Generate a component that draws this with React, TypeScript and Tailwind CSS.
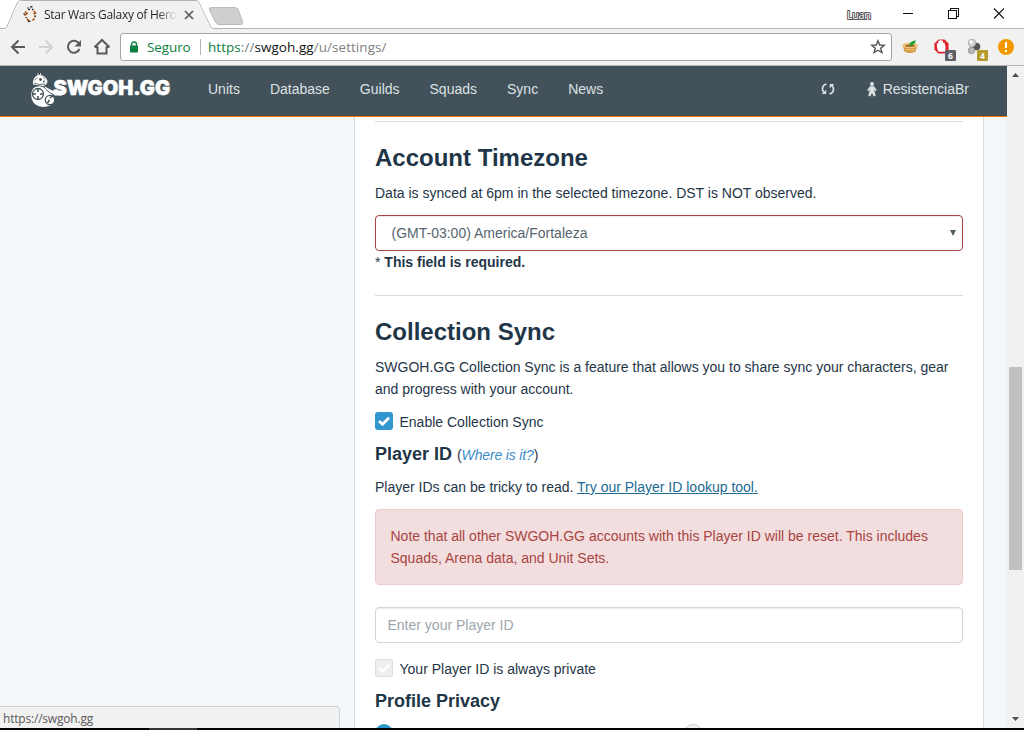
import React from 'react';

const ui = "font-['Open_Sans','Noto_Sans',sans-serif]";

function Favicon() {
  return (
    <svg width="16" height="16" viewBox="0 0 16 16">
      <path d="M4.500 4.500L7 1h2.500l2.500 3.500z" fill="#e4e0dc" />
      <path d="M5.500 1.800h1M8 .8h2.500M6 3.500h2M10 3.500h1.500" stroke="#222" strokeWidth="1.300" />
      <circle cx="8" cy="9.500" r="5.600" fill="#f4efe9" />
      <path d="M3 5.500l2 2-2.500 2M12 5l1.500 2-2 1M5 12.500l1.500 2.500M10.500 14.500l2-2" stroke="#b0501c" strokeWidth="1.600" fill="none" />
      <path d="M1.500 7.500l1.500 1M12.500 9.500l1 1.500M4 11v1M6 15.300h2.500" stroke="#2b2522" strokeWidth="1.400" fill="none" />
    </svg>
  );
}

function TabStrip() {
  return (
    <div className="relative h-[28px] shrink-0 bg-white">
      <svg className="absolute left-0 top-0" width="1024" height="29" viewBox="0 0 1024 29">
        <path d="M0 28.500H4Q6 28.500 7 26.500L17.500 2.500Q18.500.500 20.500.500H196Q198 .500 199 2.500L210.500 26.500Q211.500 28.500 213.500 28.500H1024" fill="none" stroke="#b2b2b2" />
        <path d="M5 29Q7 28.500 7.500 27L18 3Q19 1 21 1H196Q198 1 199 3L210 27Q211 29 213 29z" fill="#f1f1f1" />
        <path d="M211.500 7.500H235Q237 7.500 238 9.500L242.500 21Q243.500 24.500 241 24.500H219Q216.500 24.500 215.500 22L209.500 10Q208.500 7.500 211.500 7.500z" fill="#cfcfcf" stroke="#b9b9b9" />
      </svg>
      <div className={`relative flex h-[28px] items-center pl-[22px] ${ui}`}>
        <Favicon />
        <span className="ml-[6px] mt-[2px] w-[134px] whitespace-nowrap bg-linear-to-r from-[#222] from-85% to-transparent to-99% bg-clip-text text-[12px] leading-[18px] tracking-[-0.3px] text-transparent">
          Star Wars Galaxy of Hero
        </span>
        <svg className="ml-[6px] mt-[2px]" width="10" height="10" viewBox="0 0 10 10">
          <path d="M1 1l8 8M9 1L1 9" stroke="#5a5a5a" strokeWidth="1.700" />
        </svg>
        <svg className="ml-auto mt-[1px]" width="30" height="16" viewBox="0 0 30 16">
          <text x="1" y="12" fontSize="11" textLength="24" fill="#fff" stroke="#555" strokeWidth="2" strokeLinejoin="round" paintOrder="stroke">Luan</text>
        </svg>
        <svg className="ml-[24px] mr-[20px]" width="104" height="20" viewBox="0 0 104 20" fill="none" stroke="#111" shapeRendering="crispEdges">
          <path d="M3 9.500H13" />
          <path d="M48.500 6.500H56.500V14.500H48.500zM50.500 6V4.500H58.500V12.500H57" />
          <path d="M94 4.500L104 14.500M104 4.500L94 14.500" shapeRendering="auto" strokeWidth="1.200" />
        </svg>
      </div>
    </div>
  );
}

function Toolbar() {
  return (
    <div className={`flex h-[38px] shrink-0 items-center border-b border-[#b4b4b4] bg-[#f1f1f1] ${ui}`}>
      <svg width="120" height="37" viewBox="0 0 120 37" fill="none" strokeWidth="2">
        <path d="M25 19H12.500M18.500 12.500L12 19L18.500 25.500" stroke="#5a5a5a" />
        <path d="M39 19H51.500M45.500 12.500L52 19L45.500 25.500" stroke="#d2d2d2" />
        <path d="M79 15.500A6 6 0 1 0 79.500 21" stroke="#5a5a5a" />
        <path d="M81 12v6.500h-6.500z" fill="#5a5a5a" />
        <path d="M97.500 19V25.500H106.500V19M94.500 19.300L102 12L109.500 19.300M95 19h3M106 19h3" stroke="#5a5a5a" />
      </svg>
      <div className="flex h-[28px] w-[772px] items-center rounded-[3px] border border-[#a6a6a6] bg-white">
        <svg className="ml-[8px]" width="10" height="12" viewBox="0 0 10 12">
          <path d="M2.500 5V3.300a2.500 2.300 0 0 1 5 0V5" fill="none" stroke="#0b8043" strokeWidth="1.400" />
          <rect x="1" y="4.500" width="8" height="7" rx=".5" fill="#0b8043" />
        </svg>
        <span className="ml-[8px] w-[46px] whitespace-nowrap text-[13.500px] leading-[20px] tracking-[-0.1px] text-[#0b8043]">Seguro</span>
        <span className="ml-[7px] h-[16px] w-px bg-[#b5b5b5]" />
        <span className="ml-[7px] whitespace-nowrap text-[13.500px] leading-[20px] tracking-[0.05px] text-[#808080]">
          <span className="text-[#0b8043]">https</span>://<span className="text-[#111]">swgoh.gg</span>/u/settings/
        </span>
        <svg className="ml-auto mr-[5px]" width="16" height="16" viewBox="0 0 16 16">
          <path d="M8 1.800L9.700 6l4.500.300-3.500 2.900 1.200 4.400L8 11.200l-3.900 2.400 1.200-4.400L1.800 6.300 6.300 6z" fill="none" stroke="#555" strokeWidth="1.400" />
        </svg>
      </div>
      <svg width="132" height="37" viewBox="892 28 132 37">
        <path d="M902.500 45h15l-2 6.500q-5.500 3-11 0z" fill="#d3923a" />
        <ellipse cx="910" cy="45.500" rx="8" ry="2.800" fill="#efc77a" />
        <path d="M904.500 49.500h11M907 48.500v4M910 48.500v4M913 48.500v4" stroke="#f0c878" strokeWidth=".8" />
        <ellipse cx="910" cy="45.700" rx="5" ry="1.300" fill="#a8692a" />
        <path d="M909 46q0-5 7-5.500q-1 4-5 5z" fill="#23a332" />
        <path d="M938.500 39.500h6l4 4v6l-4 4h-6l-4-4v-6z" fill="#e0202b" />
        <path d="M938.500 51.800q-2-3-1.700-8.500h1.500v-2.500h1.500v-1h1.500v1h1.700v2h1.500l1 4v5z" fill="#fff" />
        <rect x="945" y="50" width="11" height="11" rx="1" fill="#5f6066" />
        <text x="948" y="59" fontSize="8.500" fontWeight="700" fill="#fff">6</text>
        <circle cx="976.500" cy="46.500" r="3.800" fill="#555" />
        <circle cx="972" cy="43" r="3.800" fill="#d5d5d5" stroke="#999" strokeWidth=".7" />
        <circle cx="971.500" cy="50.500" r="3.300" fill="#b7b7b7" stroke="#888" strokeWidth=".7" />
        <circle cx="971" cy="42" r="1.500" fill="#fff" />
        <rect x="977" y="50" width="11" height="11" rx="1" fill="#b29b29" />
        <text x="980" y="59" fontSize="8.500" fontWeight="700" fill="#fff">4</text>
        <circle cx="1006" cy="47" r="8" fill="#f29900" />
        <path d="M1006 42v6M1006 50v2" stroke="#fff" strokeWidth="2" />
      </svg>
    </div>
  );
}

function Logo() {
  return (
    <svg className="ml-[30px] shrink-0" width="142" height="38" viewBox="30 71 142 38">
      <path d="M38 77v-3M40.500 76v-2" stroke="#fff" strokeWidth=".8" />
      <path d="M33 85.500Q32.500 77.500 38.500 76Q46 75.500 47.500 82.500Q47 86 43 87L37 86z" fill="#fff" />
      <path d="M34.500 81l3-2.500M43 77.500l3 3M34 84q5 2.500 11 1" stroke="#43525a" strokeWidth=".8" fill="none" />
      <circle cx="40.500" cy="80.500" r="1.400" fill="#43525a" />
      <circle cx="44" cy="82.500" r=".9" fill="#43525a" />
      <path d="M33.500 89Q38 86 43 88L48 92Q54 96 54 100Q53 107 44 108Q35 108 32 101Q30 94 33.500 89z" fill="#fff" />
      <circle cx="38" cy="95" r="5.500" fill="none" stroke="#43525a" strokeWidth="1.300" />
      <path d="M38 90v3M38 97v3M33 95h3M40 95h3" stroke="#43525a" strokeWidth="1.600" />
      <circle cx="50" cy="101" r="4.700" fill="#fff" stroke="#43525a" strokeWidth="1.300" />
      <path d="M47.500 104l2-3M50 99l3-2.500" stroke="#43525a" strokeWidth="1.600" />
      <path d="M44 87L52 91.500H62V96.500H55Q48 94 44 87z" fill="#fff" />
      <path d="M46.500 91Q51 95.500 54 95.500" stroke="#43525a" strokeWidth=".9" fill="none" />
      <text x="53.500" y="96" fontFamily="Inter, sans-serif" fontSize="19.500" fontWeight="900" textLength="116.500" lengthAdjust="spacingAndGlyphs" fill="#fff" stroke="#fff" strokeWidth=".5">SWGOH.GG</text>
    </svg>
  );
}

function SiteNav() {
  return (
    <nav className="flex h-[51px] shrink-0 items-center border-b border-[#ed7500] bg-[#43525a] pb-[4px] text-[14px] leading-[20px] text-[#dce1e4]">
      <Logo />
      <div className="ml-[36px] flex gap-[30px] whitespace-nowrap">
        <span>Units</span>
        <span>Database</span>
        <span>Guilds</span>
        <span>Squads</span>
        <span>Sync</span>
        <span>News</span>
      </div>
      <svg className="ml-auto" width="14" height="14" viewBox="0 0 14 14" fill="none" stroke="#dce1e4" strokeWidth="1.700">
        <path d="M5.500 2Q1.500 3 1.500 7Q1.500 9 3 10.800M8.500 12Q12.500 11 12.500 7Q12.500 5 11 3.200" />
        <path d="M.8 12h4.400V7.800zM13.200 2H8.800V6.200z" fill="#dce1e4" stroke="none" />
      </svg>
      <svg className="ml-[32px]" width="10" height="15" viewBox="0 0 10 15" fill="#dce1e4">
        <circle cx="5" cy="2" r="2" />
        <path d="M3 4.200h4L9.800 8.300l-1.200.9L7.400 7.600v1l1.300 5.200-2 .6L5 11l-1.700 3.400-2-.6 1.300-5.200v-1L1.400 9.200l-1.200-.9z" />
      </svg>
      <span className="ml-[6px] mr-[38px]">ResistenciaBr</span>
    </nav>
  );
}

function Check({ disabled }: { disabled?: boolean }) {
  return (
    <span className={`flex size-[18px] items-center justify-center rounded-[3px] ${disabled ? 'border border-[#dcdcdc] bg-[#eee]' : 'bg-[#3097d1]'}`}>
      <svg width="12" height="10" viewBox="0 0 12 10">
        <path d="M1 5l3.500 3.300L11 1.800" fill="none" stroke="#fff" strokeWidth="2.700" />
      </svg>
    </span>
  );
}

function Settings() {
  return (
    <main className="w-[630px] shrink-0 overflow-hidden border-x border-[#d3dbe3] bg-white px-[20px] pt-[4px]">
      <div className="h-px bg-[#d3dae0]" />
      <h2 className="mt-[18px] text-[24px] font-bold leading-[36px]">Account Timezone</h2>
      <p className="mt-[6px]">Data is synced at 6pm in the selected timezone. DST is NOT observed.</p>
      <div className="mt-[11px] flex h-[36px] items-center justify-between rounded-[4px] border border-[#a94442] pl-[15.500px] pr-[5px] text-[#55656f] shadow-[inset_0_1px_1px_rgba(0,0,0,0.075)]">
        <span>(GMT-03:00) America/Fortaleza</span>
        <svg width="8" height="6" viewBox="0 0 8 6"><path d="M1 0h6L4 6z" fill="#4f5f69" /></svg>
      </div>
      <p className="font-bold"><span className="font-normal">*</span> This field is required.</p>
      <div className="mt-[22px] h-px bg-[#d3dae0]" />
      <h2 className="mt-[18px] text-[24px] font-bold leading-[36px]">Collection Sync</h2>
      <p className="mt-[6px]">
        SWGOH.GG Collection Sync is a feature that allows you to share sync your characters, gear<br />and progress with your account.
      </p>
      <div className="mt-[11px] flex h-[22px] items-center gap-[6.500px]">
        <span className="-mt-[2px]"><Check /></span>
        <span>Enable Collection Sync</span>
      </div>
      <h3 className="mt-[9px] h-[24px] text-[18px] font-bold leading-[24px]">
        Player ID <span className="text-[14px] font-normal tracking-[-0.15px]">(<i className="text-[#3c8cc9]">Where is it?</i>)</span>
      </h3>
      <p className="mt-[10px]">
        Player IDs can be tricky to read. <span className="text-[#216a94] underline">Try our Player ID lookup tool.</span>
      </p>
      <div className="mt-[11px] h-[76px] rounded-[4px] border border-[#ebccd1] bg-[#f2dede] pl-[14.500px] pt-[15px] text-[#a94442]">
        Note that all other SWGOH.GG accounts with this Player ID will be reset. This includes<br />Squads, Arena data, and Unit Sets.
      </div>
      <div className="mt-[22px] flex h-[36px] items-center rounded-[4px] border border-[#d0d8df] px-[11.500px] text-[#9ca6ad] shadow-[inset_0_1px_1px_rgba(0,0,0,0.075)]">
        Enter your Player ID
      </div>
      <div className="mt-[15px] flex h-[22px] items-center gap-[6.500px]">
        <span className="-mt-[2px]"><Check disabled /></span>
        <span>Your Player ID is always private</span>
      </div>
      <h3 className="mt-[9px] text-[18px] font-bold leading-[24px]">Profile Privacy</h3>
      <div className="mt-[11px] flex">
        <span className="size-[18px] rounded-full bg-[#3097d1]" />
        <span className="ml-[291px] size-[18px] rounded-full border border-[#ccc] bg-[#f4f4f4]" />
      </div>
    </main>
  );
}

function Scrollbar() {
  return (
    <div className="flex w-[17px] shrink-0 flex-col items-center bg-[#f1f1f1]">
      <svg width="17" height="17" viewBox="0 0 17 17"><path d="M5 11h7L8.500 7z" fill="#505050" /></svg>
      <div className="mt-[284px] h-[203px] w-[13px] bg-[#c1c1c1]" />
      <svg className="mt-auto" width="17" height="17" viewBox="0 0 17 17"><path d="M5 6h7L8.500 10z" fill="#505050" /></svg>
    </div>
  );
}

export default function App() {
  return (
    <div className="relative flex h-[730px] w-[1024px] flex-col overflow-hidden bg-[#f3f7fa] font-['Liberation_Sans',Arial,sans-serif] text-[14px] leading-[22px] text-[#1f3648]">
      <TabStrip />
      <Toolbar />
      <div className="flex min-h-0 flex-1">
        <div className="flex w-[1007px] min-w-0 flex-col">
          <SiteNav />
          <div className="flex min-h-0 flex-1 pl-[354px]">
            <Settings />
          </div>
        </div>
        <Scrollbar />
      </div>
      <div className="flex h-[2px] shrink-0 bg-black pl-[149px]">
        <span className="w-[48px] bg-[#333]" />
      </div>
      <div className={`absolute bottom-[2px] left-0 h-[22px] w-[340px] rounded-tr-[4px] border-r border-t border-[#d0d3d5] bg-[#f1f1f1] pl-[3px] text-[12px] leading-[23px] tracking-[-0.2px] text-[#5a5a5a] ${ui}`}>
        https://swgoh.gg
      </div>
    </div>
  );
}
